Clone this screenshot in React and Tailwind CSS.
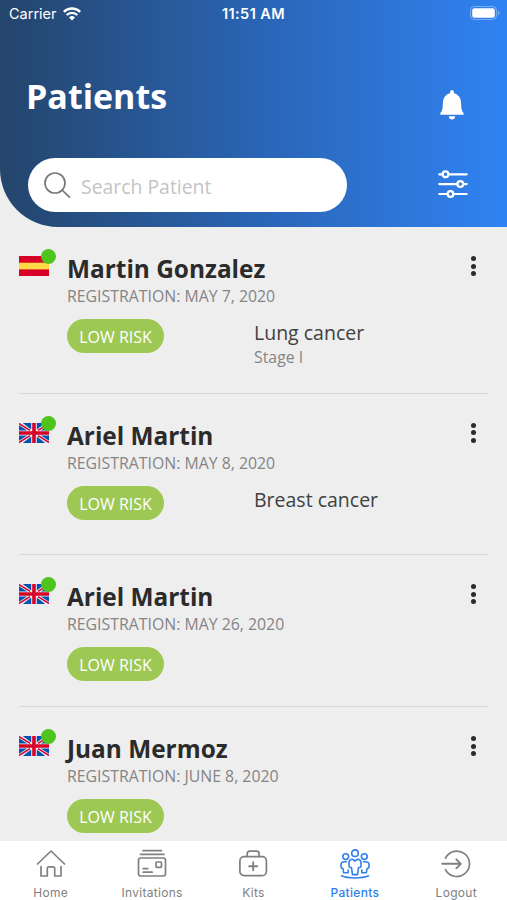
import React, { useState } from 'react';
import clsx from 'clsx';

const patients = [
  {
    id: 1,
    name: 'Martin Gonzalez',
    country: 'es',
    registration: 'MAY 7, 2020',
    risk: 'LOW RISK',
    diagnosis: 'Lung cancer',
    stage: 'Stage I',
    height: 'h-[166.5px]'
  },
  {
    id: 2,
    name: 'Ariel Martin',
    country: 'gb',
    registration: 'MAY 8, 2020',
    risk: 'LOW RISK',
    diagnosis: 'Breast cancer',
    height: 'h-[161.5px]'
  },
  {
    id: 3,
    name: 'Ariel Martin',
    country: 'gb',
    registration: 'MAY 26, 2020',
    risk: 'LOW RISK',
    height: 'h-[152px]'
  },
  {
    id: 4,
    name: 'Juan Mermoz',
    country: 'gb',
    registration: 'JUNE 8, 2020',
    risk: 'LOW RISK',
    height: 'h-[152px]'
  }
];

function WifiIcon() {
  return (
    <svg width="18" height="14" viewBox="0 0 18 14" fill="none" stroke="white" strokeWidth="2.3">
      <path d="M0.8 4.9a11.6 11.6 0 0 1 16.4 0" />
      <path d="M3.7 8a7.5 7.5 0 0 1 10.6 0" />
      <path d="M9 13.6 6 10.5a4.3 4.3 0 0 1 6 0z" fill="white" stroke="none" />
    </svg>
  );
}

function BatteryIcon() {
  return (
    <svg width="30" height="14" viewBox="0 0 30 14" fill="none">
      <rect x="0.5" y="0.5" width="26" height="13" rx="3.8" stroke="white" strokeOpacity="0.35" />
      <rect x="2.2" y="2.2" width="22.6" height="9.6" rx="2" fill="white" />
      <path d="M28 4.8c1.9.7 1.9 3.7 0 4.4z" fill="white" fillOpacity="0.4" />
    </svg>
  );
}

function BellIcon() {
  return (
    <svg width="24" height="30" viewBox="0 0 24 30" fill="white">
      <path d="M12 0c1 0 1.7.7 1.800 1.800l.2 1.400c4.200 1 6.900 4.600 7.100 9.500.2 5.600.6 8.100 2.500 10.500.5.800.2 1.600-.7 1.600H1.100c-.9 0-1.200-.8-.7-1.600 1.900-2.400 2.300-4.900 2.500-10.500.2-4.900 2.900-8.500 7.100-9.500l.2-1.400C10.300.7 11 0 12 0z" />
      <path d="M8.800 26.200h6.400c-.1 2-1.400 3.300-3.200 3.300s-3.100-1.300-3.200-3.300z" />
    </svg>
  );
}

function FilterIcon() {
  return (
    <svg width="30" height="28" viewBox="0 0 30 28" fill="none" stroke="white" strokeWidth="2.2" strokeLinecap="round">
      <path d="M1.300 4.300h3.200M10.500 4.300h18.200M1.300 14.100h18M25.300 14.100h3.400M1.300 24h8.200M15.500 24h13.200" />
      <circle cx="7.500" cy="4.300" r="2.900" />
      <circle cx="22.300" cy="14.100" r="2.900" />
      <circle cx="12.500" cy="24" r="2.900" />
    </svg>
  );
}

function SearchIcon() {
  return (
    <svg width="27" height="27" viewBox="0 0 27 27" fill="none" stroke="#777777" strokeWidth="1.7">
      <circle cx="11" cy="11" r="10" />
      <path d="M18 18l8 7.700" />
    </svg>
  );
}

function Flag({ country }) {
  if (country === 'es') {
    return (
      <svg width="30" height="20" viewBox="0 0 30 20">
        <path fill="#d80027" d="M0 0h30v20H0z" />
        <path fill="#ffda44" d="M0 6.700h30v6.700H0z" />
      </svg>
    );
  }
  return (
    <svg width="30" height="20" viewBox="0 0 30 20">
      <path fill="#f0f0f0" d="M0 0h30v20H0z" />
      <path
        fill="#0052b4"
        d="M17.800 13.500V20h8.500zM21.800 12.600 30 17.800v-5.200zM3.700 20h8.500v-6.500zM0 12.600v5.200l8.200-5.200zM12.200 0H3.700l8.500 6.500zM8.200 7.400 0 2.200v5.200zM26.300 0h-8.500v6.500zM30 7.400V2.200l-8.200 5.200z"
      />
      <path fill="#d80027" d="M13.200 0v8.200H0v3.600h13.200V20h3.600v-8.200H30V8.200H16.800V0z" />
      <path
        stroke="#d80027"
        strokeWidth="1.500"
        d="M0 0.500 11 7.400M30 0.500 19 7.400M0 19.500l11-6.900M30 19.500l-11-6.900"
      />
    </svg>
  );
}

function HomeIcon() {
  return (
    <svg width="30" height="30" viewBox="0 0 30 30" fill="none" stroke="currentColor" strokeWidth="1.7" strokeLinecap="round" strokeLinejoin="round">
      <path d="M1.500 15 15 2l13.500 13" />
      <path d="M5 17.500V27h6.300v-7.700q0-1.500 1.500-1.500h4.400q1.500 0 1.500 1.500V27H25v-9.500" />
    </svg>
  );
}

function InvitationsIcon() {
  return (
    <svg width="30" height="30" viewBox="0 0 30 30" fill="none" stroke="currentColor" strokeWidth="1.7" strokeLinecap="round">
      <path d="M6 1.700h18.500M3.500 5.300h23.500" />
      <rect x="1.500" y="9" width="27" height="18" rx="2.200" />
      <rect x="19" y="13" width="5.500" height="5.300" rx="0.800" />
      <path d="M6.200 19.700h4.500M6.200 23.200h9" />
    </svg>
  );
}

function KitsIcon() {
  return (
    <svg width="30" height="30" viewBox="0 0 30 30" fill="none" stroke="currentColor" strokeWidth="1.7" strokeLinecap="round">
      <rect x="1.900" y="7.700" width="26.500" height="19" rx="4.200" />
      <path d="M9.200 7.500V4.700q0-2.500 2.500-2.500h6.900q2.500 0 2.500 2.500v2.800" />
      <path d="M15.200 13.300v8M11.200 17.300h8" strokeWidth="1.900" />
    </svg>
  );
}

function PatientsIcon() {
  return (
    <svg width="30" height="30" viewBox="0 0 30 30" fill="none" stroke="currentColor" strokeWidth="1.6" strokeLinecap="round" strokeLinejoin="round">
      <circle cx="15" cy="4.200" r="3.300" />
      <circle cx="5.700" cy="7.600" r="2.900" />
      <circle cx="24.300" cy="7.600" r="2.900" />
      <path d="M12.700 10.300c-2.800 0-3.700 1.600-3.700 3.700v3.300q0 1.300 2.500 1.300l1 7h5l1-7q2.500 0 2.500-1.300V14c0-2.100-.9-3.700-3.700-3.700L15 12z" />
      <path d="M6.500 12.800H4.400C1.900 12.800 1 14 1 16v2.200q0 1.200 1.900 1.200l.8 4.300h4.500V21M23.500 12.800h2.100c2.500 0 3.400 1.200 3.400 3.200v2.200q0 1.200-1.900 1.200l-.8 4.300h-4.500V21" />
      <path d="M1.500 26.800c6.500 2.900 20.500 2.900 27 0" />
    </svg>
  );
}

function LogoutIcon() {
  return (
    <svg width="30" height="30" viewBox="0 0 30 30" fill="none" stroke="currentColor" strokeWidth="1.7" strokeLinecap="round" strokeLinejoin="round">
      <path d="M4.500 9A12.700 12.700 0 1 1 4.500 20.600" />
      <path d="M1.200 14.800h18.300M15.300 10.300l4.500 4.500-4.500 4.500" strokeWidth="1.900" />
    </svg>
  );
}

const tabs = [
  { id: 'home', label: 'Home', icon: HomeIcon },
  { id: 'invitations', label: 'Invitations', icon: InvitationsIcon },
  { id: 'kits', label: 'Kits', icon: KitsIcon },
  { id: 'patients', label: 'Patients', icon: PatientsIcon },
  { id: 'logout', label: 'Logout', icon: LogoutIcon }
];

function PatientRow({ patient }) {
  return (
    <li className={clsx('mx-[19px] flex shrink-0 border-b border-[#d8d8d8]', patient.height)}>
      <div className="relative mt-[29px] h-5 w-12 shrink-0">
        <Flag country={patient.country} />
        <span className="absolute left-[22px] -top-[7px] size-[15px] rounded-full bg-[#4fc41a]" />
      </div>
      <div className="grow pt-6">
        <h2 className="text-[24.4px] leading-9 font-bold text-[#2b2b2b]">{patient.name}</h2>
        <p className="-mt-px text-[15.85px] leading-5 text-[#858585]">REGISTRATION: {patient.registration}</p>
        <div className="mt-[13px] flex">
          <div className="w-[187px]">
            <span className="inline-flex h-[34px] w-[97px] items-center justify-center rounded-full bg-[#9ec854] pt-0.5 text-base text-white">
              {patient.risk}
            </span>
          </div>
          {patient.diagnosis && (
            <div>
              <p className="text-[19.5px] leading-7 text-[#404040]">{patient.diagnosis}</p>
              {patient.stage && <p className="text-[15.85px] leading-5 text-[#858585]">{patient.stage}</p>}
            </div>
          )}
        </div>
      </div>
      <button type="button" aria-label="Options" className="mt-[29px] mr-3 flex h-5 flex-col justify-between">
        <span className="size-[5px] rounded-full bg-[#2b2b2b]" />
        <span className="size-[5px] rounded-full bg-[#2b2b2b]" />
        <span className="size-[5px] rounded-full bg-[#2b2b2b]" />
      </button>
    </li>
  );
}

export default function App() {
  const [activeTab, setActiveTab] = useState('patients');
  const [search, setSearch] = useState('');

  return (
    <div className="flex h-[900px] w-full flex-col overflow-hidden bg-[#eeeeee] font-['Open_Sans',sans-serif]">
      {/* Header */}
      <header className="h-[227px] shrink-0 rounded-bl-[58px] bg-linear-to-r from-[#24456c] via-[#2a64b4] to-[#3083f3] text-white">
        <div className="grid h-7 grid-cols-3 items-center px-[9px] font-['Inter',sans-serif] text-[14.5px]">
          <div className="flex items-center gap-1.5">
            <span>Carrier</span>
            <WifiIcon />
          </div>
          <span className="text-center font-semibold tracking-[0.4px]">11:51 AM</span>
          <div className="-mt-0.5 -mr-0.5 flex justify-end">
            <BatteryIcon />
          </div>
        </div>

        <div className="flex items-start justify-between pt-11 pr-[43px] pl-[26px]">
          <h1 className="-mt-px text-[34px] leading-[50px] font-bold">Patients</h1>
          <button type="button" aria-label="Notifications" className="mt-[18px]">
            <BellIcon />
          </button>
        </div>

        <div className="mt-[37px] flex items-center justify-between pr-[39px] pl-7">
          <label className="flex h-[54px] w-[319px] items-center rounded-full bg-white pl-4">
            <SearchIcon />
            <input
              type="text"
              value={search}
              onChange={(e) => setSearch(e.target.value)}
              placeholder="Search Patient"
              className="ml-2.5 w-56 pt-1 text-[19.4px] text-[#404040] outline-none placeholder:text-[#c4c4c4]"
            />
          </label>
          <button type="button" aria-label="Filters" className="-mt-0.5">
            <FilterIcon />
          </button>
        </div>
      </header>

      {/* Patient list */}
      <ul className="flex min-h-0 grow flex-col overflow-hidden">
        {patients.map((patient) => (
          <PatientRow key={patient.id} patient={patient} />
        ))}
      </ul>

      {/* Tab bar */}
      <nav className="grid h-[59px] shrink-0 grid-cols-5 bg-white">
        {tabs.map(({ id, label, icon: Icon }) => (
          <button
            key={id}
            type="button"
            onClick={() => setActiveTab(id)}
            className={clsx(
              "flex flex-col items-center pt-2 font-['Inter',sans-serif] text-xs",
              activeTab === id ? 'font-medium text-[#2f80ed]' : 'text-[#808080]'
            )}
          >
            <Icon />
            <span className="mt-1.5 leading-4 tracking-[0.3px]">{label}</span>
          </button>
        ))}
      </nav>
    </div>
  );
}
